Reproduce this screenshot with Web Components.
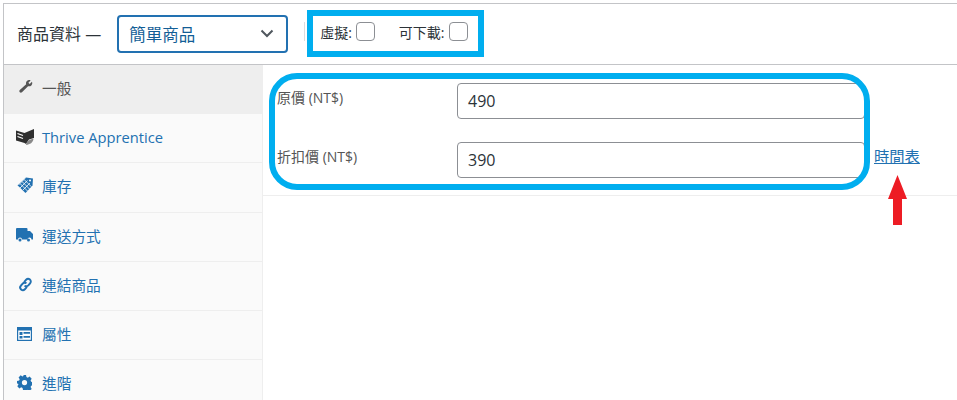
<!DOCTYPE html>
<html lang="zh-Hant">
<head>
<meta charset="utf-8">
<title>商品資料</title>
<style>
html, body { margin: 0; background: #fff; }
body { width: 957px; height: 400px; overflow: hidden; position: relative; font-family: "Open Sans", "Noto Sans CJK TC", sans-serif; }
</style>
</head>
<body>
<product-box>
  <nav-tab slot="tabs" active label="一般"><svg slot="icon" viewBox="0 0 20 20" width="15" height="15" style="margin:-2px 0 0 2px"><path fill="#555" d="M18.600 3.600c.8 1.600.5 3.600-.8 4.900-1.200 1.200-2.900 1.500-4.400 1L5.300 17.600c-.8.800-2.100.8-2.900 0s-.8-2.100 0-2.900l8.500-7.600c-.5-1.500-.2-3.200 1-4.400 1.300-1.300 3.300-1.600 4.900-.8l-3 3 1.800 1.700z"/></svg></nav-tab>
  <nav-tab slot="tabs" label="Thrive Apprentice"><svg slot="icon" viewBox="0 0 18 16" width="18" height="16"><path fill="#2f2f2f" d="M0 1.500l8.500 2.500L18 0v9l-5 1.500-3 4.500-1.500-1L0 11.500z"/><path stroke="#fff" stroke-width="1.300" fill="none" d="M1.500 4.500l5.500 2M1.500 7.500l5.500 2"/><path fill="#8a8a8a" d="M10 16c.5-3.500 3.500-6 7.500-6-.5 3.500-3.500 5.500-7.500 6z"/></svg></nav-tab>
  <nav-tab slot="tabs" label="庫存"><svg slot="icon" viewBox="0 0 17 17" width="17" height="17" style="margin-left:1px"><path fill="#2271b1" d="M9 0.500l7 1-.5 7-7 7.500L0.500 8.200z"/><path stroke="#fff" stroke-width=".8" fill="none" d="M5 4.500l7.500 7.500M7.300 2.700l7 7M3 6.500l7.500 7.500M10.500 3.500l-7.500 7.500M13 6l-7 7M8 1.500L1.500 8"/><circle cx="13" cy="3.500" r="1" fill="#fff"/></svg></nav-tab>
  <nav-tab slot="tabs" label="運送方式"><svg slot="icon" viewBox="0 0 17 14" width="17" height="14"><path fill="#2271b1" d="M1 0h9.500a1 1 0 0 1 1 1v2h2.500l3 3v5.500h-1.500a2 2 0 0 0-4 0H6a2 2 0 0 0-4 0H0V1a1 1 0 0 1 1-1z"/><circle cx="4" cy="12" r="1.500" fill="#2271b1"/><circle cx="12.500" cy="12" r="1.500" fill="#2271b1"/></svg></nav-tab>
  <nav-tab slot="tabs" label="連結商品"><svg slot="icon" viewBox="0 0 16 16" width="15" height="15" style="margin-left:2px"><g fill="none" stroke="#2271b1" stroke-width="2.100"><path d="M6.500 5.500l2.200-2.600a2.800 2.800 0 0 1 4.200 3.800L11 9a2.800 2.800 0 0 1-4 .2"/><path d="M9.500 10.500l-2.200 2.600a2.800 2.800 0 0 1-4.200-3.800L5 7a2.800 2.800 0 0 1 4-.2"/></g></svg></nav-tab>
  <nav-tab slot="tabs" label="屬性"><svg slot="icon" viewBox="0 0 15 14" width="15" height="14" style="margin-left:1px"><path fill="#2271b1" d="M0 0h15v14H0z"/><path fill="#fff" d="M1.200 3.500h12.600v9.300H1.200z"/><path fill="#2271b1" d="M2.500 5h3v3h-3zM2.500 9h3v2.500h-3zM6.500 5h6.500v1.800H6.500zM6.500 9h6.500v1.800H6.500z"/></svg></nav-tab>
  <nav-tab slot="tabs" label="進階"><svg slot="icon" viewBox="0 0 20 20" width="15" height="15" style="margin-left:1px"><path fill="#2271b1" fill-rule="evenodd" d="M8 0h4l.6 2.800 1.800.8 2.400-1.500 2.800 2.800-1.500 2.400.8 1.800 2.800.6v4l-2.800.6-.8 1.800 1.500 2.400-2.800 2.800-2.400-1.500-1.800.8L12 20H8l-.6-2.800-1.800-.8-2.400 1.500-2.800-2.800 1.500-2.400-.8-1.800L0 12V8l2.800-.6.8-1.800L2.100 3.200 4.900.4l2.400 1.500 1.800-.8zM10 6.500a3.500 3.500 0 1 0 0 7 3.500 3.500 0 0 0 0-7z"/></svg></nav-tab>
  <price-row label="原價 (NT$)" value="490"></price-row>
  <price-row label="折扣價 (NT$)" value="390" link="時間表"></price-row>
</product-box>

<script>
class NavTab extends HTMLElement {
  connectedCallback() {
    const active = this.hasAttribute('active');
    this.attachShadow({ mode: 'open' }).innerHTML = `
      <style>
      :host {
        display: flex;
        align-items: center;
        box-sizing: border-box;
        height: 49.2px;
        padding-bottom: 3px;
        background: ${active ? '#eee' : 'transparent'};
        border-bottom: 1px solid #eee;
        font-size: 14.7px;
        color: ${active ? '#555' : '#2271b1'};
      }
      .ico { width: 38px; padding-left: 12px; box-sizing: border-box; display: flex; flex: none; }
      </style>
      <span class="ico"><slot name="icon"></slot></span>
      <span>${this.getAttribute('label')}</span>`;
  }
}
customElements.define('nav-tab', NavTab);

class PriceRow extends HTMLElement {
  connectedCallback() {
    const link = this.getAttribute('link');
    this.attachShadow({ mode: 'open' }).innerHTML = `
      <style>
      :host { display: flex; height: 59px; }
      label { width: 194px; padding: 4.500px 0 0 14px; box-sizing: border-box; font-size: 14px; color: #555; line-height: 20px; flex: none; }
      .field {
        width: 408px; height: 36px; box-sizing: border-box; flex: none;
        border: 1px solid #8c8f94; border-radius: 4px;
        padding: 0 10px; font-size: 16px; line-height: 34px; color: #2c3338; background: #fff;
      }
      a { margin: 4px 0 0 9px; font-size: 15.300px; line-height: 20px; color: #2271b1; text-decoration: underline; }
      </style>
      <label>${this.getAttribute('label')}</label>
      <div class="field">${this.getAttribute('value')}</div>
      ${link ? `<a href="#">${link}</a>` : ''}`;
  }
}
customElements.define('price-row', PriceRow);

class ProductBox extends HTMLElement {
  constructor() {
    super();
    this.attachShadow({ mode: 'open' }).innerHTML = `
      <style>
      :host {
        display: block;
        position: absolute;
        inset: 3px 0 0 3px;
        border: solid #c3c4c7;
        border-width: 1px 0 0 1px;
        background: #fff;
        color: #2c3338;
      }
      header {
        display: flex; align-items: center;
        height: 61px; box-sizing: border-box;
        border-bottom: 1px solid #c3c4c7;
        padding: 0 0 1px 13px;
        font-size: 16px;
      }
      header > span:first-child { margin-bottom: 2px; }
      .select {
        display: flex; align-items: center; justify-content: space-between;
        width: 171px; height: 38px; box-sizing: border-box;
        margin-left: 16px;
        border: 2px solid #2271b1; border-radius: 4px;
        padding: 0 12px 0 10px;
        color: #135e96; font-size: 16.5px;
      }
      .sep { width: 1px; height: 19px; background: #dcdcde; margin: 0 15px 4px 16px; }
      .opt { display: flex; align-items: center; font-size: 14px; color: #2c3338; gap: 4px; margin: 0 24px 4px 0; }
      .opt i {
        display: block; width: 19px; height: 19px; box-sizing: border-box;
        border: 1px solid #8c8f94; border-radius: 4px; background: #fff;
      }
      .main { display: flex; height: 335px; }
      aside { width: 258px; flex: none; background: #fafafa; border-right: 1px solid #eee; }
      .panel { flex: 1; }
      .rows { height: 131px; box-sizing: border-box; padding-top: 18px; border-bottom: 1px solid #eee; }
      .note-a, .note-b { position: absolute; box-sizing: border-box; border: 6px solid #00aeef; pointer-events: none; }
      .note-a { left: 303px; top: 6px; width: 177px; height: 47px; }
      .note-b { left: 265px; top: 69px; width: 601px; height: 117px; border-radius: 28px; }
      .arrow { position: absolute; left: 884px; top: 171px; }
      </style>
      <header>
        <span>商品資料 —</span>
        <div class="select"><span>簡單商品</span>
          <svg width="14" height="9" viewBox="0 0 14 9"><path d="M1.500 1.500L7 7l5.500-5.500" fill="none" stroke="#50575e" stroke-width="2"/></svg>
        </div>
        <span class="sep"></span>
        <span class="opt">虛擬: <i></i></span>
        <span class="opt">可下載: <i></i></span>
      </header>
      <div class="main">
        <aside><slot name="tabs"></slot></aside>
        <div class="panel"><div class="rows"><slot></slot></div></div>
      </div>
      <div class="note-a"></div>
      <div class="note-b"></div>
      <svg class="arrow" width="19" height="50" viewBox="0 0 19 50"><path fill="#ed1c24" d="M9.500 0L19 24h-5v26H5V24H0z"/></svg>`;
  }
}
customElements.define('product-box', ProductBox);
</script>
</body>
</html>
